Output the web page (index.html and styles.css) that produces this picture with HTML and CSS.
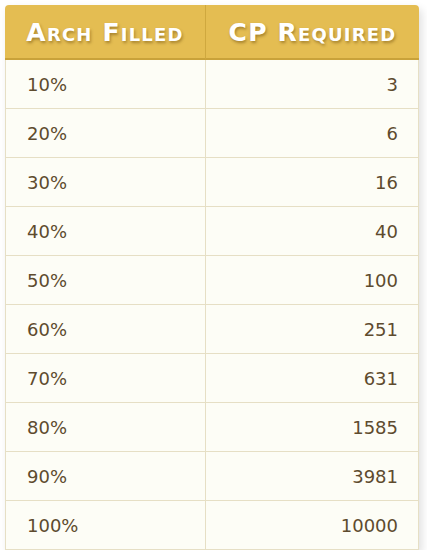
FILE: index.html
```html
<!DOCTYPE html>
<html>
<head>
<meta charset="utf-8">
<link rel="stylesheet" href="styles.css">
</head>
<body>
<table class="cp-table">
  <thead>
    <tr><th class="col-a">Arch Filled</th><th class="col-b">CP Required</th></tr>
  </thead>
  <tbody>
    <tr><td>10%</td><td class="num">3</td></tr>
    <tr><td>20%</td><td class="num">6</td></tr>
    <tr><td>30%</td><td class="num">16</td></tr>
    <tr><td>40%</td><td class="num">40</td></tr>
    <tr><td>50%</td><td class="num">100</td></tr>
    <tr><td>60%</td><td class="num">251</td></tr>
    <tr><td>70%</td><td class="num">631</td></tr>
    <tr><td>80%</td><td class="num">1585</td></tr>
    <tr><td>90%</td><td class="num">3981</td></tr>
    <tr><td>100%</td><td class="num">10000</td></tr>
  </tbody>
</table>
</body>
</html>
```
FILE: styles.css
```css
html, body {
  margin: 0;
  padding: 0;
  background: #ffffff;
}
body {
  padding: 5px 0 0 5px;
  font-family: "DejaVu Sans", Verdana, sans-serif;
}
.cp-table {
  width: 414px;
  border-collapse: separate;
  border-spacing: 0;
  box-shadow: 3px 4px 8px rgba(0,0,0,0.12);
  border-radius: 4px 4px 0 0;
}
.cp-table th {
  background: #e4bd52;
  color: #ffffff;
  font-weight: bold;
  font-variant: small-caps;
  font-size: 25px;
  letter-spacing: 1.2px;
  height: 51px;
  padding: 2px 0 0 0;
  text-align: center;
  text-shadow: 1px 2px 3px rgba(90,60,0,0.45);
  border-bottom: 2px solid #c9a23a;
}
.cp-table th.col-a {
  width: 200px;
  border-right: 1px solid #cfa83e;
  border-top-left-radius: 4px;
}
.cp-table th.col-b {
  border-top-right-radius: 4px;
}
.cp-table td {
  background: #fdfdf6;
  color: #5e4b2e;
  font-size: 18px;
  height: 48px;
  padding: 0 20px 0 21px;
  border-bottom: 1px solid #e6dfc5;
  border-right: 1px solid #e6dfc5;
}
.cp-table td:first-child {
  border-left: 1px solid #e6dfc5;
}
.cp-table td.num {
  text-align: right;
}
```
